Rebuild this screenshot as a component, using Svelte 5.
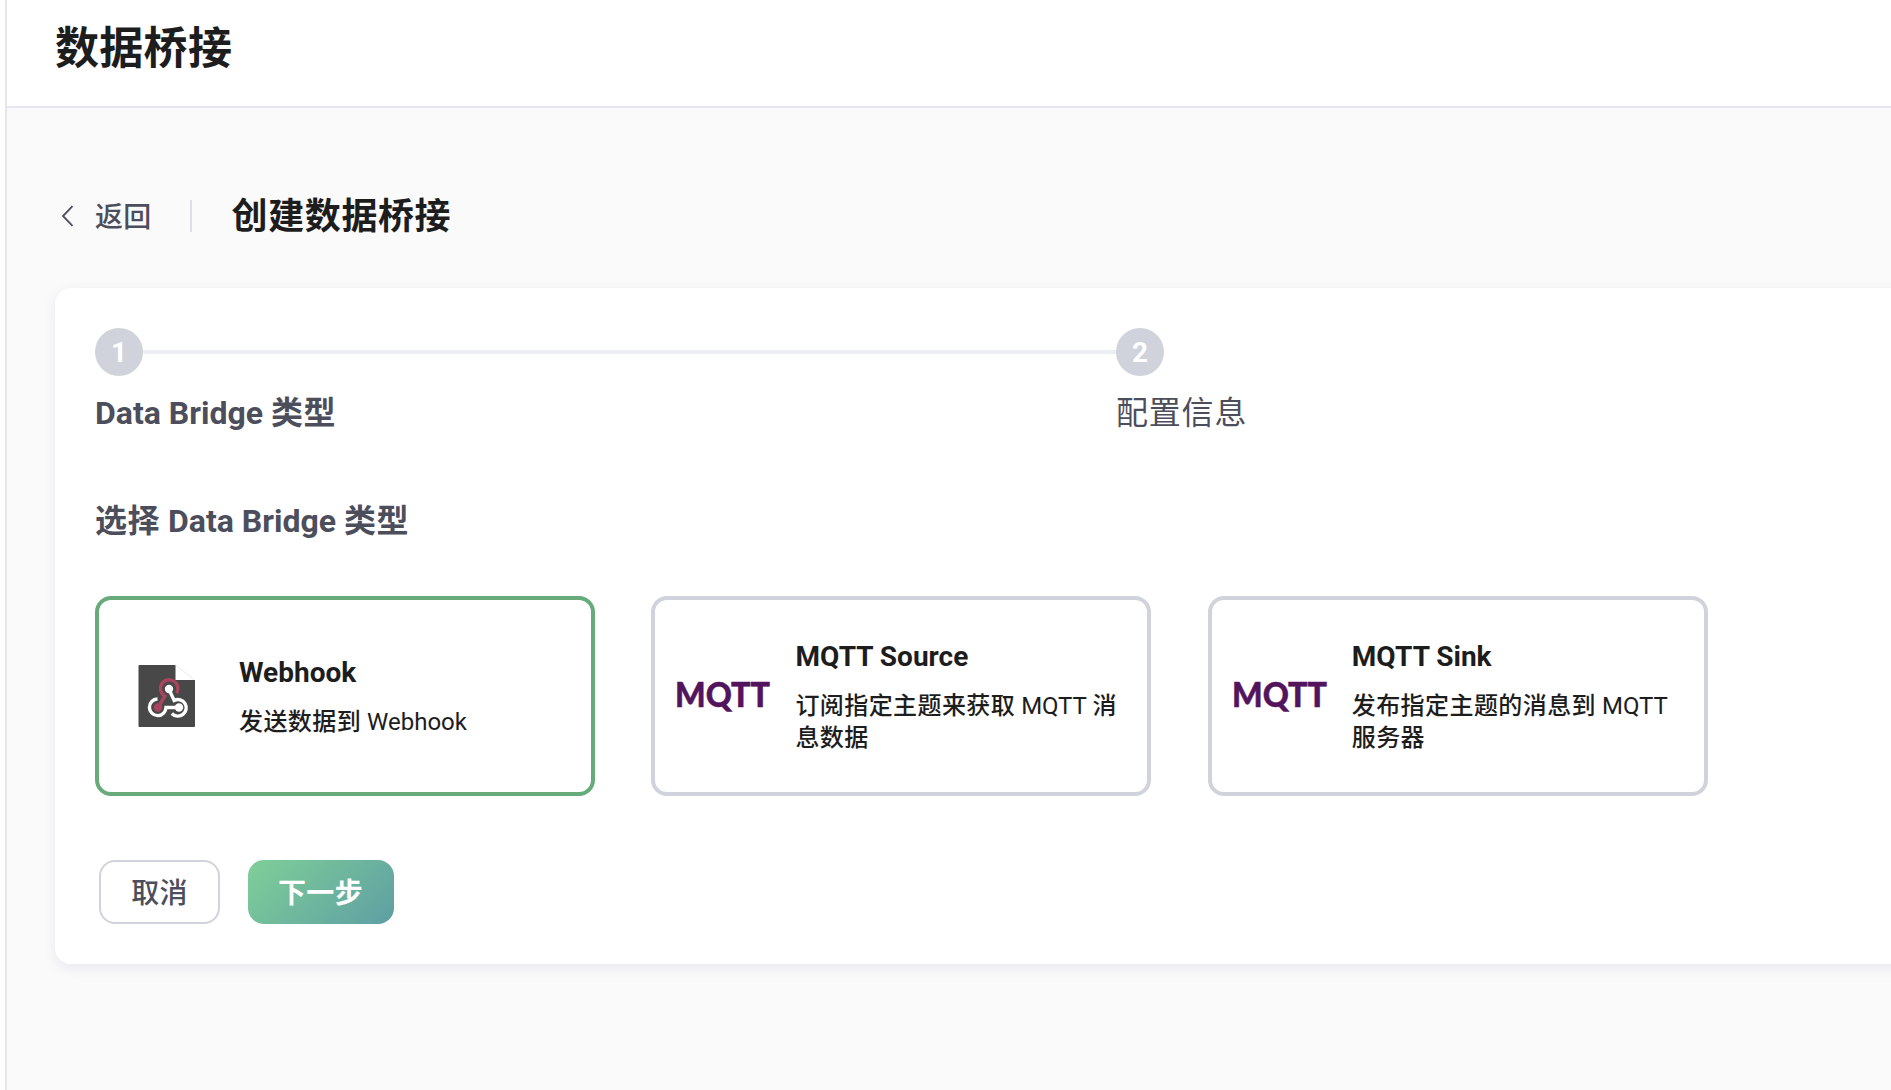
<script>
  const steps = [
    { n: 1, latin: 'Data Bridge ', label: '类型', active: true },
    { n: 2, latin: '', label: '配置信息', active: false }
  ];
  const types = [
    { icon: 'webhook', name: 'Webhook', desc: ['发送数据到', ' Webhook', ''] },
    { icon: 'mqtt', name: 'MQTT Source', desc: ['订阅指定主题来获取', ' MQTT ', '消息数据'] },
    { icon: 'mqtt', name: 'MQTT Sink', desc: ['发布指定主题的消息到', ' MQTT ', '服务器'] }
  ];
  let selected = $state(0);
</script>

<div class="page">
  <header><h1>数据桥接</h1></header>
  <main>
    <div class="crumb">
      <svg class="chev" width="12" height="22" viewBox="0 0 12 22"><path d="M10.5 1.2 1 11l9.5 9.8" fill="none" stroke="#4c4e5c" stroke-width="1.8" /></svg>
      <span class="back">返回</span>
      <i class="sep"></i>
      <h2>创建数据桥接</h2>
    </div>
    <section class="panel">
      <div class="steps">
        {#each steps as s}
          <div class="step" class:active={s.active}>
            <div class="track"><b>{s.n}</b></div>
            <div class="label">{s.latin}<span>{s.label}</span></div>
          </div>
        {/each}
      </div>
      <h3><span>选择</span> Data Bridge <span>类型</span></h3>
      <div class="types">
        {#each types as t, i}
          <button class="type" class:selected={selected === i} onclick={() => (selected = i)}>
            <span class="icon">
              {#if t.icon === 'webhook'}
                <svg class="hook" width="58" height="64" viewBox="0 0 58 64">
                  <path d="M1.5 1H37.5V16H57V62Q57 63 56 63H1.5Q.5 63 .5 62V2Q.5 1 1.5 1Z" fill="#484848" />
                  <path d="M37.5 1 56 15.5" fill="none" stroke="#d8d8d8" stroke-width=".6" />
                  <g fill="none" stroke-width="3.4">
                    <path d="M38.6 29.3A8.8 8.8 0 1 0 26.8 32.2L20 43.5" stroke="#a9445f" />
                    <path d="M19.5 35A8.3 8.3 0 1 0 28 43.5H40.5" stroke="#fff" />
                    <path d="M31 25.5 36.2 36.4A8.3 8.3 0 1 1 33.8 49.5" stroke="#fff" />
                  </g>
                  <circle cx="20" cy="43.5" r="4.2" fill="#a9445f" />
                  <circle cx="31" cy="25" r="4.2" fill="#fff" />
                  <circle cx="41" cy="43.5" r="4.2" fill="#fff" />
                </svg>
              {:else}
                <svg class="mqtt" width="100" height="44" viewBox="0 0 100 44"><text x="2" y="32.5" textLength="95" lengthAdjust="spacingAndGlyphs">MQTT</text></svg>
              {/if}
            </span>
            <span class="info">
              <strong>{t.name}</strong>
              <span class="desc"><span class="han">{t.desc[0]}</span>{t.desc[1]}<span class="han">{t.desc[2]}</span></span>
            </span>
          </button>
        {/each}
      </div>
      <div class="actions">
        <button class="cancel">取消</button>
        <button class="next">下一步</button>
      </div>
    </section>
  </main>
</div>

<style>
  :global(body) { background: #fff; overflow: hidden; }
  .page, .page * { box-sizing: border-box; }
  .page {
    height: 1090px; margin-left: 5px; border-left: 2px solid #e6e6f0; background: #fafafa;
    font-family: Roboto, 'Noto Sans CJK SC', sans-serif; color: #1d1d1d; overflow: hidden;
  }
  h1, h2, h3 { margin: 0; font-weight: 700; }
  button { font-family: inherit; color: inherit; margin: 0; }
  header { height: 108px; background: #fff; border-bottom: 2px solid #e6e6f0; padding: 17px 0 0 48px; }
  h1 { font-size: 44px; line-height: 64px; letter-spacing: .3px; }
  main { padding: 80px 0 0 48px; }
  .crumb { height: 56px; display: flex; align-items: center; }
  .chev { margin-left: 7px; }
  .back { font-size: 28px; font-weight: 500; color: #4c4e5c; margin-left: 21px; padding-bottom: 2px; letter-spacing: .3px; }
  .sep { width: 2px; height: 32px; background: #dcdde5; margin-left: 38px; }
  h2 { font-size: 36px; line-height: 52px; letter-spacing: .6px; margin-left: 40px; padding-top: 1px; }
  .panel {
    width: 1900px; height: 676px; margin-top: 44px; padding: 40px; background: #fff;
    border-radius: 16px; box-shadow: 0 4px 12px rgba(220, 220, 236, .6);
  }
  .steps { display: flex; }
  .step { width: 1021px; flex: none; }
  .step + .step { width: auto; }
  .track { display: flex; align-items: center; height: 48px; }
  .step:first-child .track::after { content: ''; flex: 1; height: 4px; background: #ededf6; }
  .track b {
    width: 48px; height: 48px; border-radius: 50%; background: #d0d3dc; color: #fff;
    font-size: 28px; line-height: 49px; text-align: center;
  }
  .label { font-size: 32px; line-height: 48px; margin-top: 13px; color: #4c4e5c; }
  .label span { letter-spacing: .8px; }
  .active .label { font-weight: 700; }
  .active .label span, h3 span { letter-spacing: .5px; }
  h3 { font-size: 32px; line-height: 48px; margin-top: 60px; color: #4c4e5c; }
  .types { display: flex; gap: 56.4px; margin-top: 51px; }
  .type {
    width: 500px; height: 200px; border: 4px solid #d0d3dc; border-radius: 16px; background: #fff;
    display: flex; align-items: center; padding: 0; text-align: left;
  }
  .type.selected { border-color: #67ab7b; }
  .icon { width: 140px; padding-left: 18px; display: flex; flex: none; }
  .hook { margin-left: 21px; }
  .mqtt { overflow: visible; }
  .mqtt text { font: 900 34px Lato, sans-serif; fill: #52145c; stroke: #52145c; stroke-width: .5px; }
  .info { width: 328px; display: flex; flex-direction: column; padding-top: 3px; }
  strong { font-size: 28px; line-height: 32px; }
  .desc { font-size: 24px; line-height: 32px; margin-top: 17px; }
  .han { font-weight: 500; letter-spacing: .42px; }
  .actions { display: flex; gap: 28px; margin: 64px 0 0 4px; }
  .actions button { height: 64px; border-radius: 16px; font-size: 28px; padding: 0 0 3px 0; letter-spacing: .3px; }
  .actions .cancel { width: 121px; border: 2px solid #d0d3dc; background: #fff; color: #4c4e5c; font-weight: 500; }
  .actions .next { width: 146px; padding-right: 1px; border: 0; background: linear-gradient(135deg, #7fcf98, #5e9fa3); color: #fff; font-weight: 700; }
</style>
